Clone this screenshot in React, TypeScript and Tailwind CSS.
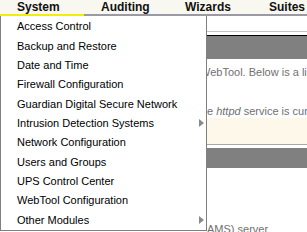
const NAV = ['System', 'Auditing', 'Wizards', 'Suites'];

interface MenuItem {
    label: string;
    sub?: boolean;
}

const MENU: MenuItem[] = [
    { label: 'Access Control' },
    { label: 'Backup and Restore' },
    { label: 'Date and Time' },
    { label: 'Firewall Configuration' },
    { label: 'Guardian Digital Secure Network' },
    { label: 'Intrusion Detection Systems', sub: true },
    { label: 'Network Configuration' },
    { label: 'Users and Groups' },
    { label: 'UPS Control Center' },
    { label: 'WebTool Configuration' },
    { label: 'Other Modules', sub: true },
];

const Arrow = () => (
    <svg width="5" height="8" viewBox="0 0 5 8" className="shrink-0">
        <polygon points="0,0 5,4 0,8" fill="#8a8a8a" />
    </svg>
);

const App = () => {
    return (
        <div className="relative w-[307px] h-[232px] overflow-hidden bg-white font-['Liberation_Sans',Arial,sans-serif]">
            {/* top nav */}
            <div className="flex h-[14px] bg-[#f8f8f0] pl-[17px] text-[12px] leading-[14px] font-bold text-[#111]">
                {NAV.map((n) => (
                    <div key={n} className="w-[84px] shrink-0 whitespace-nowrap">{n}</div>
                ))}
            </div>
            <div className="flex h-[2px]">
                <div className="w-[84px] bg-[#eeee10]"></div>
                <div className="flex-grow bg-[#9a9aa6]"></div>
            </div>

            {/* page content behind the menu */}
            <div className="text-[11px] text-[#707070] whitespace-nowrap">
                <div className="h-[15px]"></div>
                <div className="h-px bg-[#c4c4c4]"></div>
                <div className="h-[3px]"></div>
                <div className="h-[24px] border-t border-black bg-[#808080]"></div>
                <div className="h-[7px]"></div>
                <div className="pl-[200px] leading-[13px]">WebTool. Below is a list of modules</div>
                <div className="h-[26px]"></div>
                <div className="pl-[207px] leading-[13px]">
                    e <i>httpd</i> service is currently running
                </div>
                <div className="h-[26px] bg-[#fdf8ea]"></div>
                <div className="h-px bg-[#a8a8a8]"></div>
                <div className="h-[3px]"></div>
                <div className="h-[20px] bg-[#808080]"></div>
                <div className="h-[55px]"></div>
                <div className="pl-[207px] leading-[13px]">AMS) server</div>
            </div>

            {/* dropdown */}
            <div className="absolute left-0 top-[16px] w-[207px] pt-px bg-white border-l border-r border-b border-[#808080] text-[11px] text-black">
                {MENU.map((m) => (
                    <div key={m.label} className="flex items-center h-[19.33px] pl-[16px] pr-[2px] whitespace-nowrap">
                        <span className="flex-grow">{m.label}</span>
                        {m.sub && <Arrow />}
                    </div>
                ))}
            </div>
        </div>
    );
};

export default App;
